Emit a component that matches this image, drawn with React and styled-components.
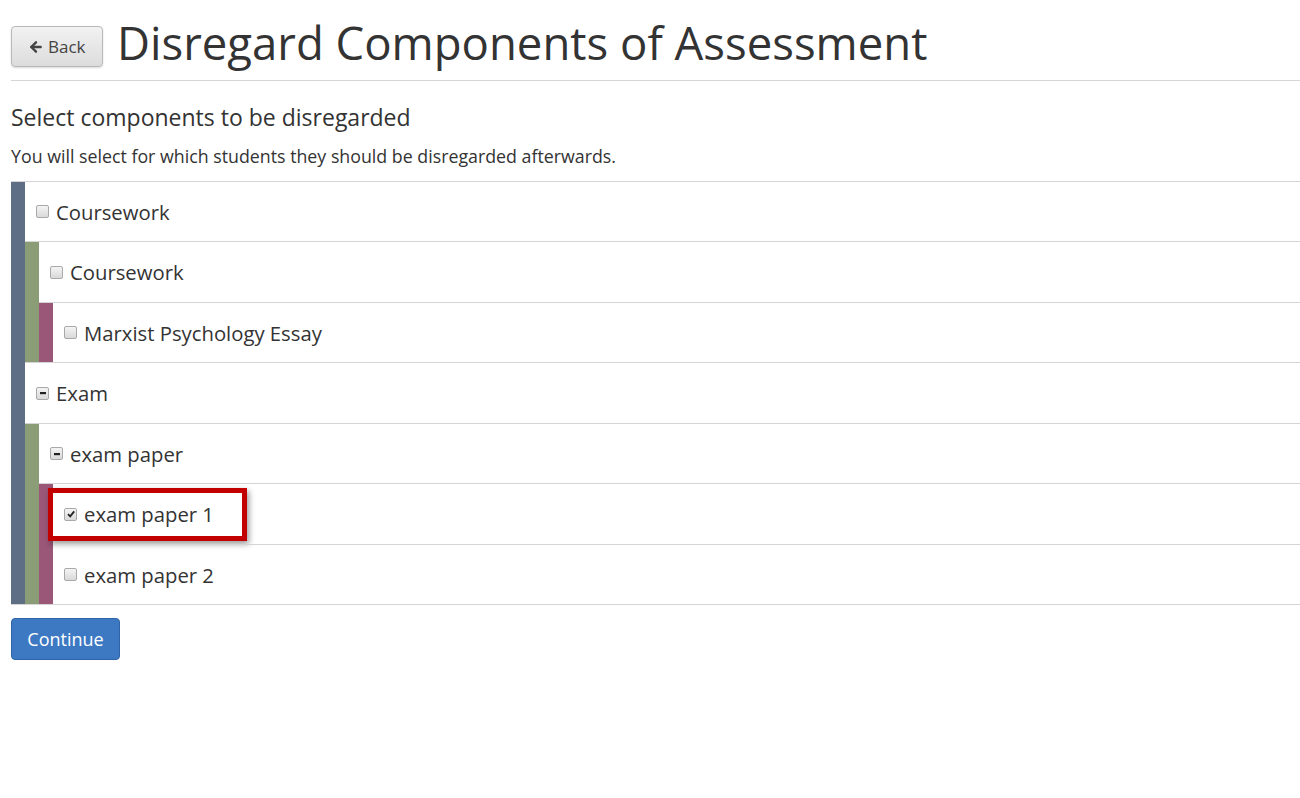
import React from 'react';
import styled, { createGlobalStyle } from 'styled-components';
import { ArrowLeft } from 'lucide-react';

const GlobalStyle = createGlobalStyle`
  body {
    margin: 0;
    background: #fff;
    font-family: "Open Sans", "Liberation Sans", sans-serif;
    color: #333;
  }
`;

const Page = styled.div`
  padding-left: 11px;
`;

const Header = styled.div`
  display: flex;
  align-items: flex-end;
  gap: 14px;
  height: 67px;
  padding-bottom: 13px;
  border-bottom: 1px solid #d6d6d6;
`;

const BackButton = styled.button`
  display: flex;
  align-items: center;
  gap: 4px;
  width: 92px;
  height: 41px;
  padding: 0 0 0 16px;
  font-family: inherit;
  font-size: 17px;
  color: #444;
  background: linear-gradient(#f2f2f2, #dcdcdc);
  border: 1px solid #b9b9b9;
  border-radius: 4px;
  box-shadow: 0 1px 2px rgba(0, 0, 0, 0.15);
`;

const Title = styled.h1`
  margin: 0;
  font-size: 45.5px;
  font-weight: 400;
  line-height: 1.1;
  color: #333;
`;

const Subtitle = styled.h3`
  margin: 22px 0 0;
  font-size: 23px;
  font-weight: 400;
  line-height: 1.3;
`;

const Note = styled.p`
  margin: 11px 0 0;
  font-size: 17.8px;
  line-height: 1.4;
`;

const Tree = styled.div`
  margin-top: 12px;
  border-top: 1px solid #d4d4d4;
  border-bottom: 1px solid #d4d4d4;
`;

const barColors = ['#5e6f85', '#8a9d76', '#9b5778'];

const GroupBox = styled.div`
  display: flex;
`;

const Bar = styled.div`
  width: 14px;
  flex: none;
  background: ${p => barColors[p.$level]};
`;

const Body = styled.div`
  flex: 1;
  & > * + * {
    border-top: 1px solid #d4d4d4;
  }
`;

const Row = styled.div`
  position: relative;
  display: flex;
  align-items: center;
  gap: 7px;
  height: 59.5px;
  padding-left: 11px;
  font-size: 20.3px;
`;

const Box = styled.span`
  display: flex;
  align-items: center;
  justify-content: center;
  width: 13px;
  height: 13px;
  box-sizing: border-box;
  border: 1px solid #a9a9a9;
  border-radius: 2px;
  background: linear-gradient(#f4f4f4, #d9d9d9);
`;

const Highlight = styled.div`
  position: absolute;
  left: -5px;
  top: 4px;
  width: 199px;
  height: 53px;
  box-sizing: border-box;
  border: 5px solid #c20000;
  box-shadow: 2px 3px 6px rgba(0, 0, 0, 0.4);
  pointer-events: none;
`;

const ContinueButton = styled.button`
  margin-top: 13px;
  width: 109px;
  height: 42px;
  font-family: inherit;
  font-size: 18px;
  color: #fff;
  background: #3d79c3;
  border: 1px solid #2f64a8;
  border-radius: 4px;
`;

const Check = ({ state }) => (
  <Box>
    {state === 'checked' && (
      <svg width="10" height="10" viewBox="0 0 10 10">
        <path d="M2 5.2 L4.2 7.4 L8.2 2.4" fill="none" stroke="#222" strokeWidth="1.8" />
      </svg>
    )}
    {state === 'partial' && (
      <svg width="10" height="10" viewBox="0 0 10 10">
        <rect x="2" y="4" width="6" height="2.2" fill="#222" />
      </svg>
    )}
  </Box>
);

const Item = ({ label, state, marked }) => (
  <Row>
    <Check state={state} />
    <span>{label}</span>
    {marked && <Highlight />}
  </Row>
);

const Group = ({ level, children }) => (
  <GroupBox>
    <Bar $level={level} />
    <Body>{children}</Body>
  </GroupBox>
);

const App = () => (
  <Page>
    <GlobalStyle />
    <Header>
      <BackButton>
        <ArrowLeft size={16} strokeWidth={3.6} />
        Back
      </BackButton>
      <Title>Disregard Components of Assessment</Title>
    </Header>
    <Subtitle>Select components to be disregarded</Subtitle>
    <Note>You will select for which students they should be disregarded afterwards.</Note>
    <Tree>
      <Group level={0}>
        <Item label="Coursework" />
        <Group level={1}>
          <Item label="Coursework" />
          <Group level={2}>
            <Item label="Marxist Psychology Essay" />
          </Group>
        </Group>
        <Item label="Exam" state="partial" />
        <Group level={1}>
          <Item label="exam paper" state="partial" />
          <Group level={2}>
            <Item label="exam paper 1" state="checked" marked />
            <Item label="exam paper 2" />
          </Group>
        </Group>
      </Group>
    </Tree>
    <ContinueButton>Continue</ContinueButton>
  </Page>
);

export default App;
